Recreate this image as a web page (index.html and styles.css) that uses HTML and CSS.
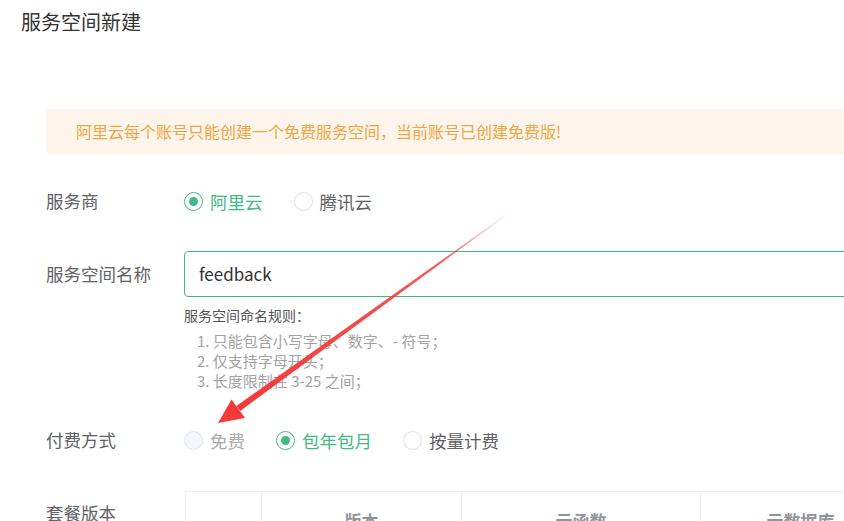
FILE: index.html
```html
<!DOCTYPE html>
<html lang="zh-CN">
<head>
<meta charset="utf-8">
<title>服务空间新建</title>
<link rel="stylesheet" href="styles.css">
</head>
<body>
<div class="page">
  <h1 class="title">服务空间新建</h1>
  <div class="content">
    <div class="alert">阿里云每个账号只能创建一个免费服务空间，当前账号已创建免费版!</div>

    <div class="form">
      <div class="form-item row-provider">
        <div class="label">服务商</div>
        <div class="control radios">
          <label class="radio checked"><span class="circle"></span><span class="rtext">阿里云</span></label>
          <label class="radio"><span class="circle"></span><span class="rtext">腾讯云</span></label>
        </div>
      </div>

      <div class="form-item row-name">
        <div class="label label-input">服务空间名称</div>
        <div class="control">
          <div class="input">feedback</div>
          <div class="help">
            <div class="help-title">服务空间命名规则：</div>
            <ol class="help-list">
              <li>1. 只能包含小写字母、数字、- 符号；</li>
              <li>2. 仅支持字母开头；</li>
              <li>3. 长度限制在 3-25 之间；</li>
            </ol>
          </div>
        </div>
      </div>

      <div class="form-item row-pay">
        <div class="label">付费方式</div>
        <div class="control radios">
          <label class="radio disabled"><span class="circle"></span><span class="rtext">免费</span></label>
          <label class="radio checked"><span class="circle"></span><span class="rtext">包年包月</span></label>
          <label class="radio"><span class="circle"></span><span class="rtext">按量计费</span></label>
        </div>
      </div>

      <div class="form-item row-plan">
        <div class="label label-plan">套餐版本</div>
        <div class="control">
          <div class="plan-table">
            <div class="th"></div>
            <div class="th">版本</div>
            <div class="th">云函数</div>
            <div class="th">云数据库</div>
          </div>
        </div>
      </div>
    </div>
  </div>
</div>

<svg class="arrow" width="844" height="521" viewBox="0 0 844 521" aria-hidden="true">
  <defs>
    <linearGradient id="fade" gradientUnits="userSpaceOnUse" x1="506" y1="215" x2="238" y2="408">
      <stop offset="0" stop-color="#f23a3a" stop-opacity="0.1"/>
      <stop offset="0.25" stop-color="#f23a3a" stop-opacity="0.85"/>
      <stop offset="1" stop-color="#f23a3a" stop-opacity="1"/>
    </linearGradient>
  </defs>
  <polygon points="506.3,215.2 505.7,214.8 236.4,405.9 240.2,410.9" fill="url(#fade)"/>
  <polygon points="218,423 231.5,399.5 245,418" fill="#f23a3a"/>
</svg>
</body>
</html>
```
FILE: styles.css
```css
html, body {
  margin: 0;
  padding: 0;
  background: #fff;
  overflow: hidden;
}

body {
  width: 844px;
  height: 521px;
  font-family: "Noto Sans CJK SC", "Noto Sans", sans-serif;
  color: #606266;
  position: relative;
}

.page {
  padding: 10px 0 0 21px;
  width: 1000px;
}

.title {
  margin: 0;
  font-size: 20px;
  line-height: 24px;
  font-weight: normal;
  color: #333;
}

.content {
  margin-left: 25px;
  margin-top: 75px;
}

.alert {
  height: 45px;
  line-height: 45px;
  padding: 0 30px;
  background: #fdf5ec;
  border-radius: 4px;
  color: #f0a541;
  font-size: 16px;
}

.form {
  margin-top: 27px;
}

.form-item {
  display: flex;
  align-items: flex-start;
}

.label {
  width: 138px;
  flex: none;
  font-size: 17.5px;
  line-height: 40px;
  color: #606266;
}

.label-input {
  line-height: 46px;
}

.label-plan {
  line-height: 44px;
}

.control {
  flex: 1;
}

.radios {
  display: flex;
  align-items: center;
  height: 40px;
}

.radio {
  display: inline-flex;
  align-items: center;
  margin-right: 31px;
  font-size: 17.5px;
  color: #606266;
}

.circle {
  width: 19px;
  height: 19px;
  box-sizing: border-box;
  border: 1px solid #dcdfe6;
  border-radius: 50%;
  background: #fff;
  margin-right: 7px;
  display: inline-flex;
  align-items: center;
  justify-content: center;
}

.radio.checked .circle {
  border-color: #42b983;
}

.radio.checked .circle::after {
  content: "";
  width: 9px;
  height: 9px;
  border-radius: 50%;
  background: #42b983;
}

.radio.checked .rtext {
  color: #42b983;
}

.radio.disabled .circle {
  background: #f3f6fc;
  border-color: #e1e4ea;
}

.radio.disabled .rtext {
  color: #a8abb2;
}

.row-name {
  margin-top: 30px;
}

.input {
  height: 46px;
  box-sizing: border-box;
  border: 1px solid #42b983;
  border-radius: 4px;
  padding: 0 14px;
  line-height: 44px;
  font-size: 17px;
  color: #303133;
}

.help {
  margin-top: 8px;
  font-size: 14px;
  line-height: 20px;
}

.help-title {
  color: #555;
}

.help-list {
  list-style: none;
  margin: 6px 0 0;
  padding: 0 0 0 13px;
  color: #a3a3a3;
  font-size: 15px;
}

.row-pay {
  margin-top: 29px;
}

.row-plan {
  margin-top: 31px;
}

.plan-table {
  display: grid;
  grid-template-columns: 76px 200px 239px 200px;
  margin-left: 1px;
  border-top: 1px solid #ebeef5;
  border-left: 1px solid #ebeef5;
}

.plan-table .th {
  border-right: 1px solid #ebeef5;
  height: 56px;
  font-size: 17px;
  font-weight: bold;
  color: #909399;
  display: flex;
  align-items: center;
  justify-content: center;
}

.arrow {
  position: absolute;
  left: 0;
  top: 0;
  pointer-events: none;
}
```
